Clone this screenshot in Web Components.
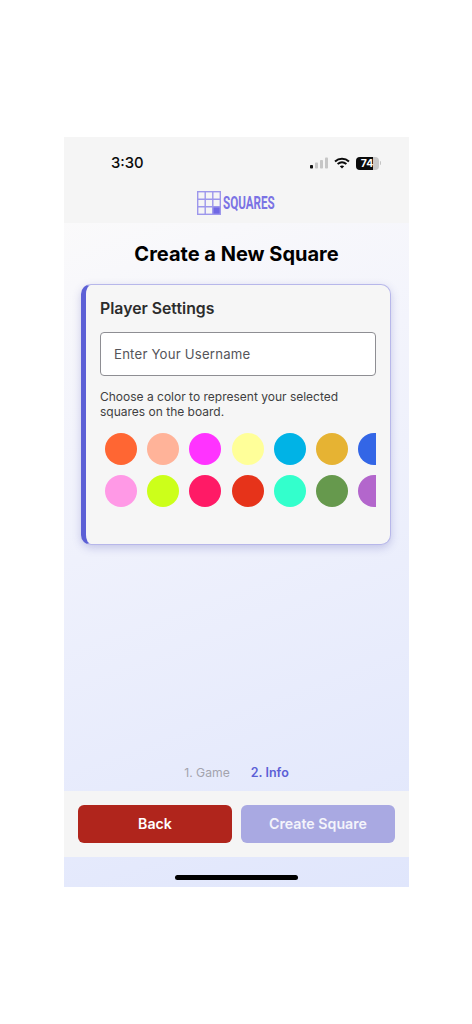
<!DOCTYPE html>
<html lang="en">
<head>
<meta charset="utf-8">
<title>Squares</title>
<style>
    html, body { margin: 0; padding: 0; background: #fff; }
    body { font-family: Inter, "Liberation Sans", sans-serif; }
</style>
</head>
<body>
<phone-frame>
    <top-header></top-header>
    <page-title>Create a New Square</page-title>
    <player-card></player-card>
    <step-indicator></step-indicator>
    <action-bar></action-bar>
</phone-frame>

<script>
class PhoneFrame extends HTMLElement {
    constructor() {
        super();
        this.attachShadow({ mode: 'open' });
        this.shadowRoot.innerHTML = `
            <style>
                :host { display: block; padding-top: 137px; height: 887px; box-sizing: border-box; }
                .frame {
                    width: 345px; height: 750px; margin-left: 64px;
                    display: flex; flex-direction: column;
                    background: linear-gradient(160deg, #fdfcfa 0%, #f3f4fc 35%, #e0e6fc 100%);
                }
                .home { height: 30px; flex: none; display: flex; justify-content: center; padding-top: 18px; box-sizing: border-box; }
                .home i { display: block; width: 123px; height: 4.5px; border-radius: 3px; background: #000; }
            </style>
            <div class="frame">
                <slot></slot>
                <div class="home"><i></i></div>
            </div>
        `;
    }
}

class TopHeader extends HTMLElement {
    constructor() {
        super();
        this.attachShadow({ mode: 'open' });
        this.shadowRoot.innerHTML = `
            <style>
                :host { display: block; height: 86px; flex: none; background: #f5f5f5; }
                .status {
                    height: 52px; display: flex; align-items: center; justify-content: space-between;
                    padding: 0 28px 0 47px; box-sizing: border-box;
                }
                .time { font-size: 14.8px; font-weight: 500; color: #0b0b0b; }
                .icons { display: flex; align-items: center; gap: 6px; }
                .battery {
                    position: relative; width: 23px; height: 13px; border-radius: 4px; overflow: hidden;
                    background: #c9c9c9; color: #fff; font-size: 10.5px; font-weight: 700;
                    display: flex; align-items: center; justify-content: center; line-height: 13px;
                }
                .battery::before { content: ''; position: absolute; left: 0; top: 0; bottom: 0; width: 74%; background: #0a0a0a; }
                .battery span { position: relative; }
                .nub { width: 1.5px; height: 4px; background: #c4c4c4; border-radius: 0 1px 1px 0; margin-left: -5px; }
                .brand { display: flex; justify-content: center; align-items: center; gap: 2px; height: 24px; padding-top: 2px; }
                .word {
                    display: block; width: 54px; height: 24px; white-space: nowrap;
                    font-family: Roboto, "Liberation Sans", sans-serif;
                    font-size: 17.5px; font-weight: 700; color: #7b73e4; line-height: 24px;
                    transform: scaleX(.665); transform-origin: left center;
                }
            </style>
            <div class="status">
                <span class="time">3:30</span>
                <div class="icons">
                    <svg width="18" height="12" viewBox="0 0 18 12">
                        <rect x="0" y="8" width="3" height="3.5" rx=".8" fill="#111"/>
                        <rect x="5" y="5.5" width="3" height="6" rx=".8" fill="#c6c6c6"/>
                        <rect x="10" y="3" width="3" height="8.5" rx=".8" fill="#c6c6c6"/>
                        <rect x="15" y="0.5" width="3" height="11" rx=".8" fill="#c6c6c6"/>
                    </svg>
                    <svg width="16" height="12" viewBox="0 0 16 12" fill="none" stroke="#0a0a0a" stroke-width="2">
                        <path d="M1 4.4C5 .9 11 .9 15 4.4"/>
                        <path d="M3.6 7C6.2 4.9 9.8 4.9 12.4 7"/>
                        <path d="M8 11.6 5.8 9.3C7 8.3 9 8.3 10.2 9.3Z" fill="#0a0a0a" stroke="none"/>
                    </svg>
                    <div class="battery"><span>74</span></div>
                    <div class="nub"></div>
                </div>
            </div>
            <div class="brand">
                <svg width="24" height="24" viewBox="0 0 24 24" fill="none" stroke="#9d97ec" stroke-width="1.4">
                    <rect x="15.6" y="15.6" width="8" height="8" fill="#7068e4" stroke="none"/>
                    <rect x=".7" y=".7" width="22.6" height="22.6"/>
                    <path d="M8.2 .6V23.4M15.8 .6V23.4M.6 8.2H23.4M.6 15.8H23.4"/>
                </svg>
                <span class="word">SQUARES</span>
            </div>
        `;
    }
}

class PageTitle extends HTMLElement {
    constructor() {
        super();
        this.attachShadow({ mode: 'open' });
        this.shadowRoot.innerHTML = `
            <style>
                :host {
                    display: block; flex: none; height: 61px; box-sizing: border-box; padding-top: 15px;
                    text-align: center; font-size: 20px; line-height: 32px; font-weight: 700; color: #000;
                }
            </style>
            <slot></slot>
        `;
    }
}

class PlayerCard extends HTMLElement {
    constructor() {
        super();
        this.attachShadow({ mode: 'open' });
        this.shadowRoot.innerHTML = `
            <style>
                :host { display: block; flex: none; margin: 0 18px 0 17px; }
                .card {
                    height: 261px; box-sizing: border-box; background: #f6f6f6; border-radius: 10px;
                    border: 1px solid #b7b7ea; border-left: 5px solid #5c60d6;
                    box-shadow: 0 3px 8px rgba(70, 70, 170, .25);
                    padding: 12px 14px 0 14px;
                }
                h2 { margin: 0; font-size: 15.8px; line-height: 24px; font-weight: 600; color: #2c2c2c; }
                .name {
                    margin-top: 11px; height: 44px; box-sizing: border-box; padding-left: 13px;
                    background: #fff; border: 1px solid #8e8e93; border-radius: 4px;
                    display: flex; align-items: center;
                    font-size: 13.2px; color: #55555a; letter-spacing: .2px;
                }
                p { margin: 13px 0 0; font-size: 12px; line-height: 15px; color: #3f3f42; }
            </style>
            <div class="card">
                <h2>Player Settings</h2>
                <div class="name">Enter Your Username</div>
                <p>Choose a color to represent your selected squares on the board.</p>
                <color-swatches></color-swatches>
            </div>
        `;
    }
}

const SWATCHES = [
    '#ff6633', '#ffb399', '#ff33ff', '#ffff99', '#00b3e6', '#e6b333', '#3366e6',
    '#ff99e6', '#ccff1a', '#ff1a66', '#e6331a', '#33ffcc', '#66994d', '#b366cc'
];

class ColorSwatches extends HTMLElement {
    constructor() {
        super();
        this.attachShadow({ mode: 'open' });
        const dots = SWATCHES.map(c => `<i style="background:${c}"></i>`).join('');
        this.shadowRoot.innerHTML = `
            <style>
                :host { display: block; margin-top: 14px; overflow: hidden; }
                .grid {
                    display: grid; grid-template-columns: repeat(7, 32px);
                    gap: 10px 10.2px; padding: 0 5px; width: max-content;
                }
                i { display: block; width: 32px; height: 32px; border-radius: 50%; }
            </style>
            <div class="grid">${dots}</div>
        `;
    }
}

class StepIndicator extends HTMLElement {
    constructor() {
        super();
        this.attachShadow({ mode: 'open' });
        this.shadowRoot.innerHTML = `
            <style>
                :host {
                    display: flex; flex: 1; align-items: flex-end; justify-content: center; gap: 21px;
                    padding-bottom: 9px; font-size: 12.2px; line-height: 18px;
                }
                .off { color: #a3a3ad; }
                .on { color: #5c60d6; font-weight: 600; font-size: 12.5px; }
            </style>
            <span class="off">1. Game</span>
            <span class="on">2. Info</span>
        `;
    }
}

class ActionBar extends HTMLElement {
    constructor() {
        super();
        this.attachShadow({ mode: 'open' });
        this.shadowRoot.innerHTML = `
            <style>
                :host {
                    display: flex; flex: none; height: 66px; box-sizing: border-box; gap: 9px;
                    padding: 14px 14px 14px 14px; background: #f5f5f5;
                }
                button {
                    flex: 1; height: 38px; padding: 0 0 1px; border: 0; border-radius: 6px; color: #fff;
                    font: 600 14.2px Inter, "Liberation Sans", sans-serif;
                }
                .back { background: #b0251c; }
                .create { background: #a9a9e2; color: #f4f4fb; }
            </style>
            <button class="back">Back</button>
            <button class="create">Create Square</button>
        `;
    }
}

customElements.define('phone-frame', PhoneFrame);
customElements.define('top-header', TopHeader);
customElements.define('page-title', PageTitle);
customElements.define('color-swatches', ColorSwatches);
customElements.define('player-card', PlayerCard);
customElements.define('step-indicator', StepIndicator);
customElements.define('action-bar', ActionBar);
</script>
</body>
</html>
